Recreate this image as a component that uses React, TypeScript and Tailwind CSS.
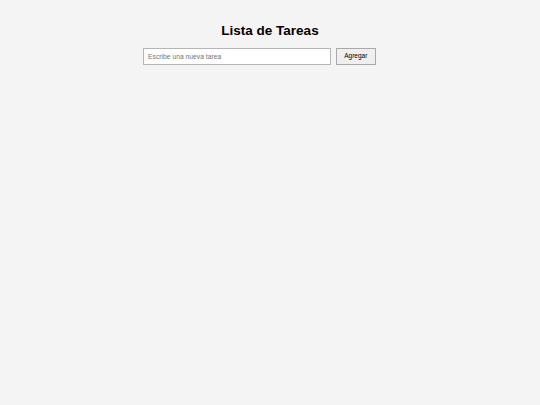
import { useState } from 'react';

export default function App() {
	const [tarea, setTarea] = useState('');
	const [tareas, setTareas] = useState<string[]>([]);

	const handleSubmit = (e: any) => {
		e.preventDefault();
		if (!tarea.trim()) return;
		setTareas([...tareas, tarea.trim()]);
		setTarea('');
	};

	return (
		<div className="min-h-screen bg-[#f4f4f4] font-['Liberation_Sans',Arial,sans-serif] text-black">
			<div className="w-[254px] mx-auto pt-[23px]">
				<h1 className="text-[13.5px] leading-[15.5px] font-bold text-center">
					Lista de Tareas
				</h1>
				<form onSubmit={handleSubmit} className="flex items-center gap-[5px] mt-[9px]">
					<input
						type="text"
						value={tarea}
						onChange={(e) => setTarea(e.target.value)}
						placeholder="Escribe una nueva tarea"
						className="w-[188px] h-[17.5px] bg-white border border-[#b5b5b5] px-[4px] text-[6.75px] placeholder:text-[#757575] outline-none"
					/>
					<button
						type="submit"
						className="w-[39.5px] h-[17.5px] bg-[#efefef] border border-[#a9a9a9] text-[6.5px] text-black"
					>
						Agregar
					</button>
				</form>
				<ul className="mt-[8px]">
					{tareas.map((t, i) => (
						<li key={i} className="text-[6.75px] py-[2px]">
							{t}
						</li>
					))}
				</ul>
			</div>
		</div>
	);
}
